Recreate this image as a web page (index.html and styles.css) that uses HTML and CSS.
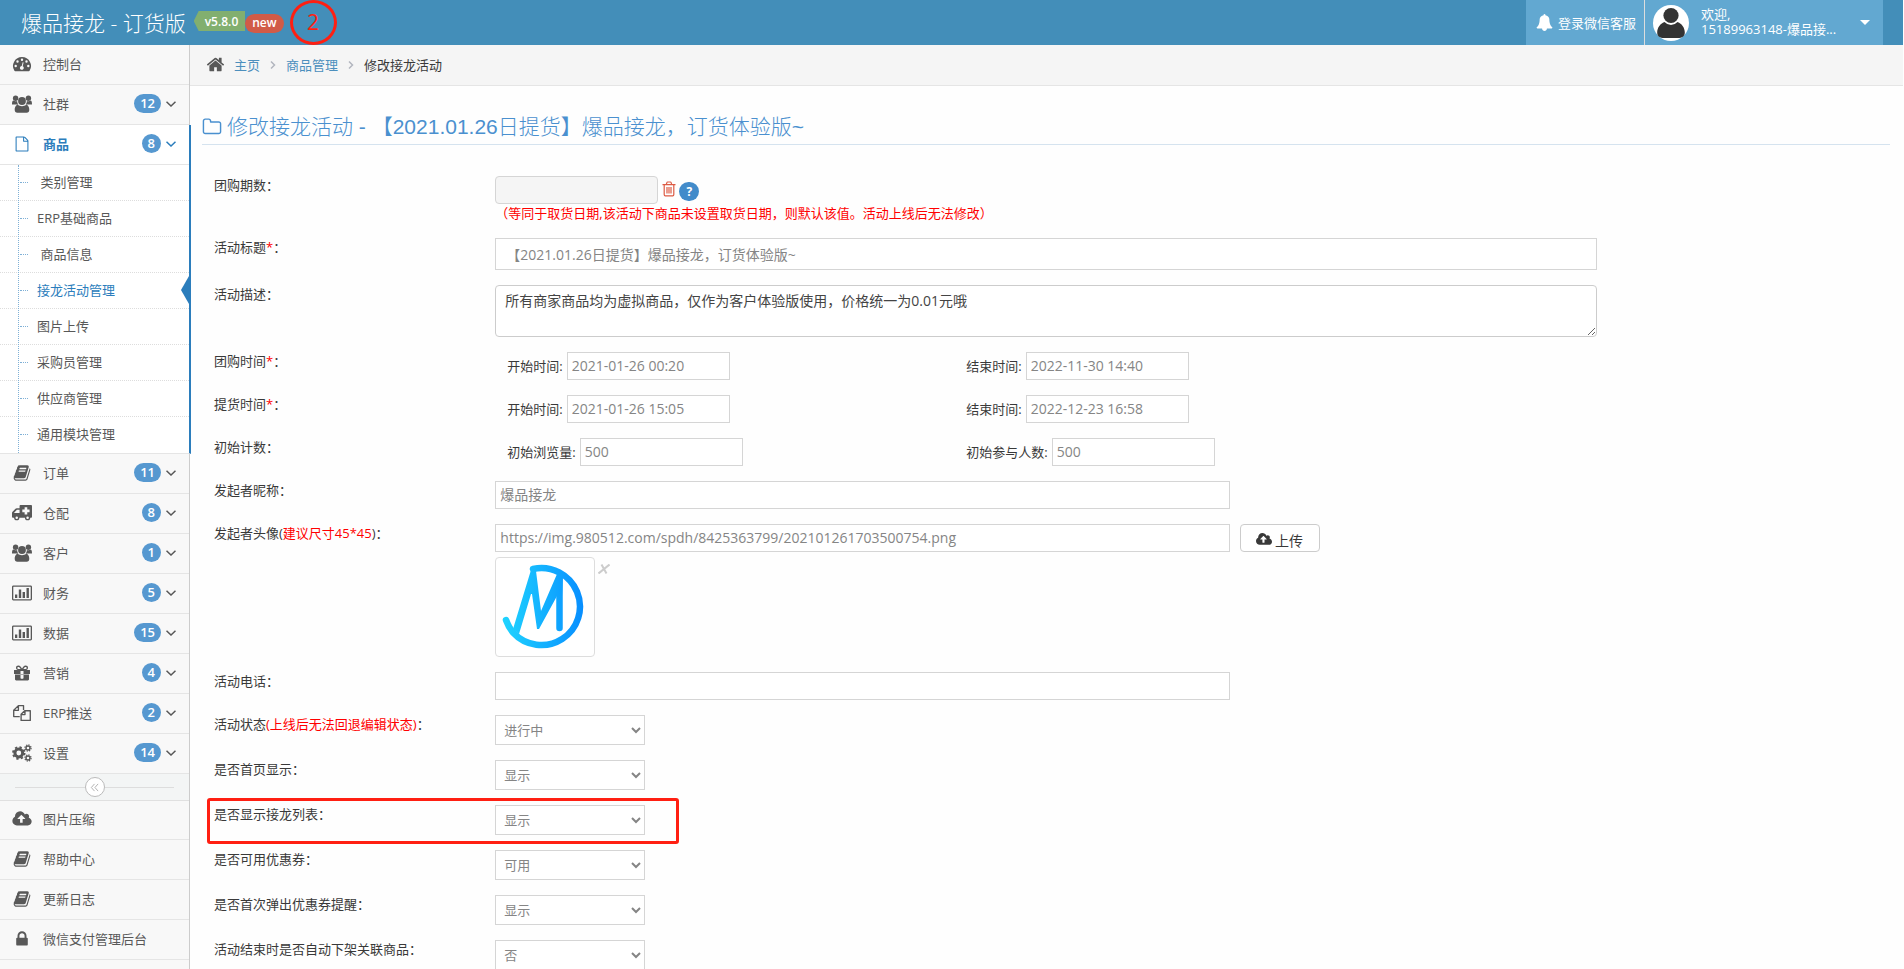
FILE: index.html
```html
<!DOCTYPE html>
<html lang="zh-CN">
<head>
<meta charset="utf-8">
<title>爆品接龙 - 订货版</title>
<link rel="stylesheet" href="styles.css">
</head>
<body>
<svg class="sprite" aria-hidden="true">
  <symbol id="i-dash" viewBox="-1 -1 20 18"><path fill-rule="evenodd" d="M9 1a9 9 0 0 0-7.600 13.800c.2.300.4.400.8.400h13.600c.4 0 .6-.1.800-.4A9 9 0 0 0 9 1zM9 2.500a1.200 1.200 0 1 1 0 2.400 1.200 1.200 0 0 1 0-2.400zM4.500 4.300a1.200 1.200 0 1 1 0 2.400 1.200 1.200 0 0 1 0-2.400zM13.500 4.300a1.200 1.200 0 1 1 0 2.400 1.200 1.200 0 0 1 0-2.400zM2.700 8.800a1.200 1.200 0 1 1 0 2.400 1.200 1.200 0 0 1 0-2.400zM15.300 8.800a1.200 1.200 0 1 1 0 2.400 1.200 1.200 0 0 1 0-2.400zM9.700 6.300l.9.300-.9 3.600a1.900 1.900 0 1 1-1-.200z"/></symbol>
  <symbol id="i-group" viewBox="0 0 20 18"><circle cx="3.600" cy="3.200" r="2.700"/><circle cx="16.400" cy="3.200" r="2.700"/><circle cx="10" cy="6" r="3.900"/><path d="M0 9.200c0-2 .4-3.700 1.600-3.700.5.500 1.300.8 2 .8.600 0 1.100-.1 1.500-.300 0 1.400.4 2.500 1.200 3.500H1.700C.7 9.500 0 9.400 0 9.200zM20 9.200c0-2-.4-3.700-1.600-3.700-.5.500-1.300.8-2 .8-.6 0-1.100-.1-1.500-.300 0 1.400-.4 2.500-1.200 3.500h4.600c1 0 1.700-.1 1.700-.300zM6 9.800c1 1 2.500 1.400 4 1.400s3-.4 4-1.400c2.300 0 3.300 2.700 3.300 5 0 1.700-1 3-2.700 3H5.400c-1.700 0-2.700-1.300-2.700-3 0-2.300 1-5 3.300-5z"/></symbol>
  <symbol id="i-file" viewBox="-180 -180 2150 2150"><path d="M1596 380q28 28 48 76t20 88v1152q0 40-28 68t-68 28h-1344q-40 0-68-28t-28-68v-1600q0-40 28-68t68-28h896q40 0 88 20t76 48zm-444-244v376h376q-10-29-22-41l-313-313q-12-12-41-22zm384 1528v-1024h-416q-40 0-68-28t-28-68v-416h-768v1536h1280z"/></symbol>
  <symbol id="i-book" viewBox="0 0 1792 1792"><path d="M1703 478q40 57 18 129l-275 906q-19 64-76.500 107.500t-122.500 43.500h-923q-77 0-148.500-53.500t-99.500-131.500q-24-67-2-127 0-4 3-27t4-37q1-8-3-21.500t-3-19.500q2-11 8-21t16.500-23.500 16.500-23.500q23-38 45-91.500t30-91.500q3-10 .5-30t-.5-28q3-11 17-28t17-23q21-36 42-92t25-90q1-9-2.500-32t.5-28q4-13 22-30.500t22-22.500q19-26 42.500-84.500t27.500-96.500q1-8-3-25.500t-2-26.500q2-8 9-18t18-23 17-21q8-12 16.500-30.500t15-35 16-36 19.500-32 26.500-23.500 36-11.500 47.500 5.500l-1 3q38-9 51-9h761q74 0 114 56t18 130l-274 906q-36 119-71.500 153.500t-128.500 34.500h-869q-27 0-38 15-11 16-1 43 24 70 144 70h923q29 0 56-15.500t35-41.500l300-987q7-22 5-57 38 15 59 43zm-1064 2q-4 13 2 22.500t20 9.500h608q13 0 25.500-9.500t16.500-22.500l21-64q4-13-2-22.500t-20-9.500h-608q-13 0-25.500 9.500t-16.500 22.500zm-83 256q-4 13 2 22.500t20 9.500h608q13 0 25.500-9.500t16.500-22.500l21-64q4-13-2-22.500t-20-9.500h-608q-13 0-25.500 9.500t-16.500 22.500z"/></symbol>
  <symbol id="i-truck" viewBox="0 0 19 16"><path fill-rule="evenodd" d="M8 .5h10.200c.5 0 .8.300.8.800v10.500c0 .5-.3.700-.8.700h-.9a2.500 2.500 0 0 1-5 0H7a2.500 2.500 0 0 1-5 0H.9c-.6 0-.9-.3-.9-.8V8c0-.5.200-.9.500-1.200L3.300 4c.3-.3.700-.5 1.200-.5H7.200V1.300c0-.5.300-.8.800-.8zM4.700 5 2 7.700V8h5.200V5zM12 2.500v2.200H9.800v2.500H12v2.200h2.500V7.200h2.200V4.700h-2.200V2.500zM4.500 11.300a1.200 1.200 0 1 0 0 2.400 1.200 1.200 0 0 0 0-2.400zM14.800 11.300a1.200 1.200 0 1 0 0 2.400 1.200 1.200 0 0 0 0-2.400z"/></symbol>
  <symbol id="i-chart" viewBox="0 0 20 16"><path fill-rule="evenodd" d="M1.400.5h17.200c.8 0 1.400.6 1.400 1.400v12.200c0 .8-.6 1.400-1.400 1.400H1.400C.6 15.500 0 14.900 0 14.100V1.900C0 1.100.6.5 1.400.5zm.2 1.300a.3.300 0 0 0-.3.300v11.800c0 .2.100.3.300.3h16.800c.2 0 .3-.1.300-.3V2.100a.3.300 0 0 0-.3-.3zM3 9.500h2.300v3.500H3zM6.800 4.500h2.400V13H6.800zM10.600 7H13v6h-2.400zM14.500 3h2.400v10h-2.400z"/></symbol>
  <symbol id="i-gift" viewBox="-1 -1 18 18"><path fill-rule="evenodd" d="M1 9.500h14v4.700c0 .7-.5 1.200-1.200 1.200H2.200c-.7 0-1.200-.5-1.200-1.200zM.4 5h3.500C2.600 4.800 2 3.800 2 2.800 2 1.500 3 .6 4.300.6c1 0 1.700.4 2.200 1L8 3.400l1.500-1.800c.5-.6 1.200-1 2.200-1C13 .6 14 1.500 14 2.800c0 1-.6 2-1.900 2.200h3.500c.2 0 .4.200.4.400v3.700H0V5.400c0-.2.200-.4.400-.4zM4.300 1.900a1 1 0 0 0 0 2h2.400L5.300 2.300c-.3-.3-.6-.4-1-.4zm7.400 0c-.4 0-.7.100-1 .4L9.300 3.900h2.400a1 1 0 0 0 0-2zM6.500 6v7c0 .5.3.7.700.7h1.600c.4 0 .7-.2.700-.7V6z"/></symbol>
  <symbol id="i-files" viewBox="0 0 20 20"><path fill="none" stroke="currentColor" stroke-width="1.500" stroke-linejoin="round" d="M7.500 14H.8V7L6 1.800h5.700v5M6 1.800V7H.8M9 18.200V11.500l4-4h6.200v10.700zM13.300 7.500v4.300H9"/></symbol>
  <symbol id="i-cogs" viewBox="0 0 20 18"><g fill="none" stroke="currentColor"><circle cx="6.800" cy="9" r="3.900" stroke-width="3"/><circle cx="6.800" cy="9" r="5.800" stroke-width="1.900" stroke-dasharray="2.300 2.255"/><circle cx="16" cy="4" r="2" stroke-width="1.400"/><circle cx="16" cy="4" r="3.100" stroke-width="1.200" stroke-dasharray="1.300 1.135"/><circle cx="16" cy="14" r="2" stroke-width="1.400"/><circle cx="16" cy="14" r="3.100" stroke-width="1.200" stroke-dasharray="1.300 1.135"/></g></symbol>
  <symbol id="i-cloud" viewBox="0 0 1920 1792"><path d="M1280 864q0-14-9-23l-352-352q-9-9-23-9t-23 9l-351 351q-10 12-10 24 0 14 9 23t23 9h224v352q0 13 9.500 22.500t22.500 9.500h192q13 0 22.500-9.500t9.500-22.500v-352h224q13 0 22.500-9.500t9.500-22.500zm640 288q0 159-112.500 271.500t-271.500 112.500h-1088q-185 0-316.500-131.500t-131.500-316.500q0-130 70-240t188-165q-2-30-2-43 0-212 150-362t362-150q156 0 285.500 87t188.500 231q71-62 166-62 106 0 181 75t75 181q0 76-41 138 130 31 213.500 135.500t83.500 238.500z"/></symbol>
  <symbol id="i-lock" viewBox="0 0 1792 1792"><path d="M640 768h512v-192q0-106-75-181t-181-75-181 75-75 181v192zm832 96v576q0 40-28 68t-68 28h-960q-40 0-68-28t-28-68v-576q0-40 28-68t68-28h32v-192q0-184 132-316t316-132 316 132 132 316v192h32q40 0 68 28t28 68z"/></symbol>
  <symbol id="i-home" viewBox="0 0 1792 1792"><path d="M1472 992v480q0 26-19 45t-45 19h-384v-384h-256v384h-384q-26 0-45-19t-19-45v-480q0-1 .5-3t.5-3l575-474 575 474q1 2 1 6zm223-69l-62 74q-8 9-21 11h-3q-13 0-21-7l-692-577-692 577q-12 8-24 7-13-2-21-11l-62-74q-8-10-7-23.500t11-21.500l719-599q32-26 76-26t76 26l244 204v-195q0-14 9-23t23-9h192q14 0 23 9t9 23v408l219 182q10 8 11 21.500t-7 23.500z"/></symbol>
  <symbol id="i-folder" viewBox="0 0 1792 1792"><path d="M1600 1312v-704q0-40-28-68t-68-28h-704q-40 0-68-28t-28-68v-64q0-40-28-68t-68-28h-320q-40 0-68 28t-28 68v960q0 40 28 68t68 28h1216q40 0 68-28t28-68zm128-704v704q0 92-66 158t-158 66h-1216q-92 0-158-66t-66-158v-960q0-92 66-158t158-66h320q92 0 158 66t66 158v32h672q92 0 158 66t66 158z"/></symbol>
  <symbol id="i-bell" viewBox="0 0 1792 1792"><path d="M1728 1408q0 52-38 90t-90 38h-448q0 106-75 181t-181 75-181-75-75-181h-448q-52 0-90-38t-38-90q50-42 91-88t85-119.500 74.500-158.500 50-206 19.500-260q0-152 117-282.500t307-158.500q-8-19-8-39 0-40 28-68t68-28 68 28 28 68q0 20-8 39 190 28 307 158.500t117 282.500q0 139 19.500 260t50 206 74.500 158.500 85 119.500 91 88z"/></symbol>
  <symbol id="i-trash" viewBox="0 0 14 16"><path fill="none" stroke="currentColor" stroke-width="1.200" d="M.5 3.600h13M4.300 3.400l.6-1.800c.1-.4.300-.6.700-.6h2.800c.4 0 .6.200.7.600l.6 1.800M2.200 3.600v10c0 .9.500 1.300 1.100 1.300h7.400c.6 0 1.100-.4 1.100-1.300v-10M5 6v6.500M7 6v6.500M9 6v6.500"/></symbol>
  <symbol id="i-down" viewBox="0 0 10 6"><path fill="none" stroke="currentColor" stroke-width="1.500" d="M.5.700 5 5 9.500.7"/></symbol>
  <symbol id="i-right" viewBox="0 0 6 10"><path fill="none" stroke="currentColor" stroke-width="1.500" d="M1 1.500 4.500 5 1 8.500"/></symbol>
</svg>

<div class="app">
  <header class="topbar">
    <a class="brand" href="#">爆品接龙 - 订货版</a>
    <span class="version">v5.8.0</span><span class="new">new</span>
    <span class="step-mark">2</span>
    <div class="top-actions">
      <a class="service" href="#"><svg class="bell"><use href="#i-bell"/></svg>登录微信客服</a>
      <button class="user" type="button">
        <svg class="avatar" viewBox="0 0 36 36"><circle cx="18" cy="18" r="18" fill="#fff"/><circle cx="18" cy="10.500" r="7.600" fill="#333"/><path fill="#333" d="M11.500 17c-4.500 1.500-7.300 6-7.300 10.500C4.200 31.500 7 33 11 33h14c4 0 6.800-1.500 6.800-5.500 0-4.500-2.800-9-7.300-10.500a8.700 8.700 0 0 1-13 0z"/></svg>
        <span class="user-info">欢迎,<br>15189963148-爆品接...</span>
        <span class="caret"></span>
      </button>
    </div>
  </header>

  <div class="body">
    <nav class="sidebar">
      <ul class="menu">
        <li><a href="#"><svg class="ico"><use href="#i-dash"/></svg>控制台</a></li>
        <li><a href="#"><svg class="ico"><use href="#i-group"/></svg>社群<span class="badge">12</span><svg class="arrow"><use href="#i-down"/></svg></a></li>
        <li class="active"><a href="#"><svg class="ico"><use href="#i-file"/></svg>商品<span class="badge">8</span><svg class="arrow"><use href="#i-down"/></svg></a>
          <ul class="submenu">
            <li><a href="#">&nbsp;类别管理</a></li>
            <li><a href="#">ERP基础商品</a></li>
            <li><a href="#">&nbsp;商品信息</a></li>
            <li class="current"><a href="#">接龙活动管理</a></li>
            <li><a href="#">图片上传</a></li>
            <li><a href="#">采购员管理</a></li>
            <li><a href="#">供应商管理</a></li>
            <li><a href="#">通用模块管理</a></li>
          </ul>
        </li>
        <li><a href="#"><svg class="ico"><use href="#i-book"/></svg>订单<span class="badge">11</span><svg class="arrow"><use href="#i-down"/></svg></a></li>
        <li><a href="#"><svg class="ico"><use href="#i-truck"/></svg>仓配<span class="badge">8</span><svg class="arrow"><use href="#i-down"/></svg></a></li>
        <li><a href="#"><svg class="ico"><use href="#i-group"/></svg>客户<span class="badge">1</span><svg class="arrow"><use href="#i-down"/></svg></a></li>
        <li><a href="#"><svg class="ico"><use href="#i-chart"/></svg>财务<span class="badge">5</span><svg class="arrow"><use href="#i-down"/></svg></a></li>
        <li><a href="#"><svg class="ico"><use href="#i-chart"/></svg>数据<span class="badge">15</span><svg class="arrow"><use href="#i-down"/></svg></a></li>
        <li><a href="#"><svg class="ico"><use href="#i-gift"/></svg>营销<span class="badge">4</span><svg class="arrow"><use href="#i-down"/></svg></a></li>
        <li><a href="#"><svg class="ico"><use href="#i-files"/></svg>ERP推送<span class="badge">2</span><svg class="arrow"><use href="#i-down"/></svg></a></li>
        <li><a href="#"><svg class="ico"><use href="#i-cogs"/></svg>设置<span class="badge">14</span><svg class="arrow"><use href="#i-down"/></svg></a></li>
      </ul>
      <div class="collapse"><button type="button" aria-label="收起菜单"><svg viewBox="0 0 10 10"><path d="M5 1 1.500 5 5 9M9 1 5.500 5 9 9"/></svg></button></div>
      <ul class="menu extra">
        <li><a href="#"><svg class="ico"><use href="#i-cloud"/></svg>图片压缩</a></li>
        <li><a href="#"><svg class="ico"><use href="#i-book"/></svg>帮助中心</a></li>
        <li><a href="#"><svg class="ico"><use href="#i-book"/></svg>更新日志</a></li>
        <li><a href="#"><svg class="ico"><use href="#i-lock"/></svg>微信支付管理后台</a></li>
      </ul>
    </nav>

    <main class="main">
      <div class="crumbs">
        <svg class="home"><use href="#i-home"/></svg><a href="#">主页</a><svg class="sep"><use href="#i-right"/></svg><a href="#">商品管理</a><svg class="sep"><use href="#i-right"/></svg><span>修改接龙活动</span>
      </div>
      <div class="page">
        <h1><svg class="folder"><use href="#i-folder"/></svg>修改接龙活动 - 【2021.01.26日提货】爆品接龙，订货体验版~</h1>
        <form class="form">
          <div class="row">
            <label class="name" for="period">团购期数：</label>
            <div class="field">
              <div class="inline period"><input class="short rounded" id="period" disabled><button class="trash" type="button" aria-label="清除"><svg><use href="#i-trash"/></svg></button><button class="help" type="button">?</button></div>
              <p class="hint">（等同于取货日期,该活动下商品未设置取货日期，则默认该值。活动上线后无法修改）</p>
            </div>
          </div>
          <div class="row">
            <label class="name" for="title">活动标题<b>*</b>：</label>
            <div class="field"><input class="title" id="title" value="【2021.01.26日提货】爆品接龙，订货体验版~"></div>
          </div>
          <div class="row">
            <label class="name" for="desc">活动描述：</label>
            <div class="field"><textarea id="desc">所有商家商品均为虚拟商品，仅作为客户体验版使用，价格统一为0.01元哦</textarea></div>
          </div>
          <div class="row">
            <span class="name">团购时间<b>*</b>：</span>
            <div class="field pair">
              <div class="inline"><label for="g1">开始时间:</label><input class="short" id="g1" value="2021-01-26 00:20"></div>
              <div class="inline"><label for="g2">结束时间:</label><input class="short" id="g2" value="2022-11-30 14:40"></div>
            </div>
          </div>
          <div class="row">
            <span class="name">提货时间<b>*</b>：</span>
            <div class="field pair">
              <div class="inline"><label for="t1">开始时间:</label><input class="short" id="t1" value="2021-01-26 15:05"></div>
              <div class="inline"><label for="t2">结束时间:</label><input class="short" id="t2" value="2022-12-23 16:58"></div>
            </div>
          </div>
          <div class="row">
            <span class="name">初始计数：</span>
            <div class="field pair">
              <div class="inline"><label for="c1">初始浏览量:</label><input class="short" id="c1" value="500"></div>
              <div class="inline"><label for="c2">初始参与人数:</label><input class="short" id="c2" value="500"></div>
            </div>
          </div>
          <div class="row">
            <label class="name" for="nick">发起者昵称：</label>
            <div class="field"><input class="medium" id="nick" value="爆品接龙"></div>
          </div>
          <div class="row">
            <label class="name" for="head">发起者头像(<b>建议尺寸45*45</b>)：</label>
            <div class="field">
              <div class="inline"><input class="medium" id="head" value="https://img.980512.com/spdh/8425363799/202101261703500754.png"><button class="upload" type="button"><svg><use href="#i-cloud"/></svg>上传</button></div>
              <div class="preview">
                <div class="thumb"><svg viewBox="0 0 98 98"><defs><linearGradient id="g" gradientUnits="userSpaceOnUse" x1="7" y1="0" x2="89" y2="0"><stop offset="0" stop-color="#1fd4ff"/><stop offset="1" stop-color="#078dff"/></linearGradient></defs><g fill="none" stroke="url(#g)" stroke-linecap="round" stroke-linejoin="round"><path stroke-width="6.500" d="M37 11A38.500 38.500 0 1 1 17 74.500Q13 70 10 62"/><path stroke-width="6.500" d="M63.500 70V22"/></g><path fill="url(#g)" d="M35 12l5 1 5 40L61 16l6 2-1 20h-5L43 71h-2l-5-35h-1L23 76l-6-5z"/></svg></div>
                <button class="remove" type="button" aria-label="删除"><svg viewBox="0 0 12 10"><path d="M11.500.5.500 9.500M3.500.5 8.500 9.500"/></svg></button>
              </div>
            </div>
          </div>
          <div class="row">
            <label class="name" for="phone">活动电话：</label>
            <div class="field"><input class="medium" id="phone"></div>
          </div>
          <div class="row">
            <label class="name" for="s1">活动状态<b>(上线后无法回退编辑状态)</b>：</label>
            <div class="field"><select id="s1"><option>进行中</option></select></div>
          </div>
          <div class="row">
            <label class="name" for="s2">是否首页显示：</label>
            <div class="field"><select id="s2"><option>显示</option></select></div>
          </div>
          <div class="row marked">
            <label class="name" for="s3">是否显示接龙列表：</label>
            <div class="field"><select id="s3"><option>显示</option></select></div>
          </div>
          <div class="row">
            <label class="name" for="s4">是否可用优惠券：</label>
            <div class="field"><select id="s4"><option>可用</option></select></div>
          </div>
          <div class="row">
            <label class="name" for="s5">是否首次弹出优惠券提醒：</label>
            <div class="field"><select id="s5"><option>显示</option></select></div>
          </div>
          <div class="row">
            <label class="name" for="s6">活动结束时是否自动下架关联商品：</label>
            <div class="field"><select id="s6"><option>否</option></select></div>
          </div>
        </form>
      </div>
    </main>
  </div>
</div>
</body>
</html>
```

FILE: styles.css
```css
*, *::before, *::after { box-sizing: border-box; }
body {
  margin: 0;
  font: 13px/20px "Open Sans", "Noto Sans CJK SC", sans-serif;
  color: #393939;
  background: #fefefe;
}
a { color: inherit; text-decoration: none; }
ul { list-style: none; margin: 0; padding: 0; }
button, input, select, textarea { font-family: inherit; margin: 0; }
button { padding: 0; border: 0; background: none; color: inherit; cursor: pointer; }
svg { fill: currentColor; flex: none; }
.sprite { position: absolute; width: 0; height: 0; }

.app { height: 100vh; display: flex; flex-direction: column; overflow: hidden; padding-right: 1px; }

/* top bar */
.topbar { flex: none; height: 45px; display: flex; align-items: center; background: #438eb9; color: #fff; padding-right: 20px; }
.brand { font: 21px/44px "Open Sans", "Noto Sans CJK SC", sans-serif; font-weight: 300; padding-left: 21px; margin-right: 8px; }
.version {
  height: 20px; padding: 0 7px 0 11px; margin-bottom: 3px; font-size: 12px; line-height: 22px; font-weight: 600;
  background: #82af6f; clip-path: polygon(0 50%, 5px 0, 100% 0, 100% 100%, 5px 100%);
}
.new { height: 19px; padding: 0 7px; border-radius: 10px; background: #d15b47; font-size: 12px; line-height: 18px; font-weight: 600; margin-top: 2px; }
.step-mark {
  width: 47px; height: 45px; margin-left: 6px; border: 3px solid #ff1f12; border-radius: 50%;
  color: #ff1f12; font-size: 21px; line-height: 38px; text-align: center;
}
.top-actions { margin-left: auto; display: flex; align-self: stretch; background: #62a8d1; }
.service { display: flex; align-items: center; padding: 0 8px 0 10px; border-right: 1px solid #ddd; }
.bell { width: 17px; height: 17px; margin-right: 5px; }
.user { display: flex; align-items: center; padding: 0 13px 0 8px; text-align: left; }
.avatar { width: 36px; height: 36px; margin-right: 12px; }
.user-info { width: 159px; font-size: 13px; line-height: 15px; padding-bottom: 2px; }
.caret { border: 5px solid transparent; border-top-color: #fff; border-bottom: 0; }

.body { flex: 1; min-height: 0; display: flex; }

/* sidebar */
.sidebar { width: 190px; flex: none; background: #f8f8f8; border-right: 1px solid #ccc; color: #585858; }
.menu > li { border-bottom: 1px solid #e5e5e5; }
.menu > li > a { height: 39px; display: flex; align-items: center; padding: 0 13px 2px 12px; }
.ico { width: 20px; height: 18px; margin-right: 11px; }
.badge { margin-left: auto; min-width: 19px; height: 19px; padding: 0 6px; border-radius: 10px; background: #5698d0; color: #fff; font-size: 13px; line-height: 18px; font-weight: 600; text-align: center; }
.arrow { width: 10px; height: 6px; margin-left: 5px; }
.menu > .active { background: #fff; border-right: 2px solid #2b7dbc; margin-right: -2px; position: relative; }
.active > a { color: #2b7dbc; font-weight: 700; border-bottom: 1px solid #e5e5e5; }
.menu > .active > a { height: 40px; }
.extra > li:first-child > a { height: 38px; }
.submenu { position: relative; }
.submenu::before { content: ""; position: absolute; left: 18px; top: 0; bottom: 0; border-left: 1px dotted #7fb0d6; z-index: 1; }
.submenu li { position: relative; height: 36px; border-bottom: 1px dotted #ddd; }
.submenu li:last-child { border-bottom: 0; }
.submenu li::before { content: ""; position: absolute; left: 20px; top: 17px; width: 8px; border-top: 1px dotted #7fb0d6; }
.submenu a { display: block; padding-left: 37px; line-height: 34px; }
.submenu .current { color: #2b7dbc; }
.submenu .current::after { content: ""; position: absolute; right: 0; top: 3px; border: 14px solid transparent; border-left: 0; border-right: 8px solid #2b7dbc; }
.collapse { height: 27px; background: #f3f5f5; border-bottom: 1px solid #e0e0e0; display: flex; align-items: center; padding: 0 15px; }
.collapse::before, .collapse::after { content: ""; flex: 1; height: 1px; background: #ddd; }
.collapse button { width: 20px; height: 20px; border: 1px solid #bbb; border-radius: 50%; background: #fff; color: #aaa; display: grid; place-items: center; }
.collapse svg { width: 9px; height: 9px; fill: none; stroke: currentColor; }

/* content */
.main { flex: 1; min-width: 0; overflow: hidden; }
.crumbs { height: 41px; display: flex; align-items: center; padding: 0 16px 1px; background: #f5f5f5; border-bottom: 1px solid #e5e5e5; }
.crumbs a { color: #4c8fbd; }
.home { width: 19px; height: 19px; margin-right: 9px; color: #585858; }
.sep { width: 6px; height: 10px; margin: 0 10px; color: #b2b6bf; }
.page { padding: 21px 13px 0 12px; }
h1 {
  display: flex; align-items: center; margin: 0 0 31px; padding-top: 2px; border-bottom: 1px solid #d5e3ef;
  font: 300 21px/35px "Liberation Sans", "Noto Sans CJK SC", sans-serif; color: #4a90cf;
}
.folder { width: 20px; height: 20px; margin-right: 5px; }
.form { display: flex; flex-direction: column; gap: 15px; }
.row { display: grid; grid-template-columns: 2fr 8fr 2fr; position: relative; }
.row > * { min-width: 0; margin: 0 12px; }
.name { line-height: 19px; }
.name b { color: #f00; font-weight: 400; }
.inline { display: flex; align-items: center; }
.pair { display: grid; grid-template-columns: 5fr 7fr; }
.pair .inline { padding-left: 12px; gap: 4px; }
input, textarea, select { display: block; border: 1px solid #d5d5d5; border-radius: 0; background: #fff; color: #858585; font-size: 14px; }
input { height: 28px; padding: 0 4px 2px; }
.short { width: 163px; }
.rounded { border-radius: 4px; background: #f5f5f5; }
.medium { width: 66.667%; }
.title { width: 100%; height: 32px; padding: 0 10px; }
textarea { width: 100%; height: 52px; padding: 5px 9px; border-color: #ccc; border-radius: 4px; line-height: 20px; color: #444; }
select { width: 150px; height: 30px; padding: 0 4px; font-size: 13px; }
.trash { width: 14px; height: 17px; margin: 0 3px 3px 4px; color: #dd5a43; }
.trash svg { width: 14px; height: 16px; display: block; }
.help { width: 20px; height: 19px; border-radius: 10px; background: #428bca; color: #fff; font-size: 12px; line-height: 18px; font-weight: 700; margin-top: 3px; }
.hint { margin: 0; height: 19px; line-height: 19px; color: #f00; white-space: nowrap; }
.upload { width: 80px; height: 28px; margin-left: 10px; padding-top: 3px; border: 1px solid #ccc; border-radius: 4px; background: #fff; font-size: 14px; display: flex; align-items: center; justify-content: center; gap: 3px; }
.upload svg { width: 16px; height: 15px; }
.preview { display: flex; align-items: flex-start; margin-top: 5px; }
.thumb { width: 100px; height: 100px; border: 1px solid #ddd; border-radius: 4px; background: #fff; }
.thumb svg { display: block; }
.remove { margin: 7px 0 0 3px; }
.remove svg { display: block; width: 12px; height: 10px; fill: none; stroke: #ccc; stroke-width: 2; }
.marked::after { content: ""; position: absolute; left: 5px; top: -7px; width: 472px; height: 46px; border: 3px solid #ff1f12; border-radius: 3px; pointer-events: none; }
```
